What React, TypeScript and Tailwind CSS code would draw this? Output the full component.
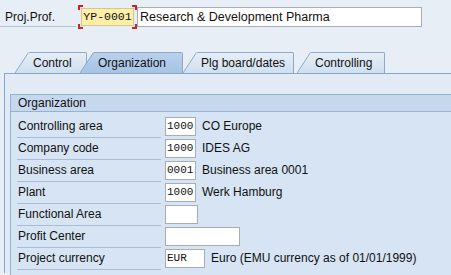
import React from 'react'

type Row = {
  label: string
  value?: string
  width: string
  text?: string
}

const rows: Row[] = [
  { label: 'Controlling area', value: '1000', width: 'w-[31px]', text: 'CO Europe' },
  { label: 'Company code', value: '1000', width: 'w-[31px]', text: 'IDES AG' },
  { label: 'Business area', value: '0001', width: 'w-[31px]', text: 'Business area 0001' },
  { label: 'Plant', value: '1000', width: 'w-[31px]', text: 'Werk Hamburg' },
  { label: 'Functional Area', width: 'w-[33px]' },
  { label: 'Profit Center', width: 'w-[75px]' },
  { label: 'Project currency', value: 'EUR', width: 'w-[40px]', text: 'Euro (EMU currency as of 01/01/1999)' },
]

const tabs = [
  { id: 'ctl', label: 'Control', cls: 'w-[72px] z-[1]' },
  { id: 'org', label: 'Organization', cls: 'w-[103px] -ml-[7px] z-[5]', active: true },
  { id: 'plg', label: 'Plg board/dates', cls: 'w-[111px] z-[2]' },
  { id: 'cos', label: 'Controlling', cls: 'w-[88px] ml-[3px] z-[1]' },
]

const sans = "font-['Liberation_Sans',Arial,sans-serif]"
const mono = "font-['Liberation_Mono','Courier_New',monospace]"

function Tab({ id, label, cls, active }: { id: string; label: string; cls: string; active?: boolean }) {
  const top = active ? '#b9d1ec' : '#e6eef7'
  const bottom = active ? '#a6c4e5' : '#d0dfef'
  return (
    <div className={`relative flex h-[21px] ${cls}`}>
      <svg width="14" height="21" viewBox="0 0 14 21" className="shrink-0">
        <defs>
          <linearGradient id={`tab-${id}`} x1="0" y1="0" x2="0" y2="1">
            <stop offset="0" stopColor={top} />
            <stop offset="1" stopColor={bottom} />
          </linearGradient>
        </defs>
        <polygon points="0,21 13,0.5 14,0.5 14,21" fill={`url(#tab-${id})`} />
        <line x1="0" y1="21" x2="13.5" y2="0.5" stroke="#8fa9c7" strokeWidth="1" />
      </svg>
      <div
        className={`flex-1 flex items-center pl-[4px] border-t border-r border-[#8fa9c7] rounded-tr-[2px] text-[12px] text-[#111] ${
          active ? 'bg-gradient-to-b from-[#b9d1ec] to-[#a6c4e5]' : 'bg-gradient-to-b from-[#e6eef7] to-[#d0dfef]'
        }`}
      >
        {label}
      </div>
    </div>
  )
}

export default function App() {
  return (
    <div className={`w-[451px] h-[275px] overflow-hidden bg-[#e8eef5] ${sans} text-[12px] text-[#111]`}>
      {/* header field */}
      <div className="flex items-center h-[24px] mt-[5px]">
        <div className="w-[76px] h-[20px] flex items-center pl-[5px] border-b border-[#b4c3d4]">Proj.Prof.</div>
        <div className="relative ml-[2px] w-[59px] h-[24px] flex items-center justify-center">
          <span className="absolute left-0 top-0 w-[5px] h-[5px] border-l-2 border-t-2 border-[#d0202a]" />
          <span className="absolute right-0 top-0 w-[5px] h-[5px] border-r-2 border-t-2 border-[#d0202a]" />
          <span className="absolute left-0 bottom-0 w-[5px] h-[5px] border-l-2 border-b-2 border-[#d0202a]" />
          <span className="absolute right-0 bottom-0 w-[5px] h-[5px] border-r-2 border-b-2 border-[#d0202a]" />
          <div className={`w-[53px] h-[18px] bg-[#fdeea8] border border-[#d8c787] flex items-center justify-center ${mono} text-[11.5px]`}>
            YP-0001
          </div>
        </div>
        <div className="w-[285px] h-[20px] bg-white border border-[#a7adb5] flex items-center pl-[2px] text-[12.5px]">
          Research &amp; Development Pharma
        </div>
      </div>

      {/* tabs */}
      <div className="flex mt-[23px] pl-[15px] h-[21px]">
        {tabs.map((t) => (
          <Tab key={t.id} {...t} />
        ))}
      </div>

      {/* panel */}
      <div className="ml-[4px] h-[200px] bg-[#e1eaf5] border-t border-l border-[#89a7cb] pt-[20px] pl-[5px]">
        <div className="border-t border-l border-[#98b1cf] bg-[#d6e4f3] h-[200px]">
          <div className="h-[17px] bg-[#c6d8ed] border-b border-[#98b1cf] flex items-center pl-[7px]">Organization</div>
          <div className="pt-[4px] pl-[6px]">
            {rows.map((r) => (
              <div key={r.label} className="flex items-start h-[22px]">
                <div className="w-[144px] h-[22px] pl-[1px] pt-[3px] border-b border-[#aabdd5] leading-[15px]">{r.label}</div>
                <div
                  className={`ml-[4px] mt-[1px] ${r.width} h-[19px] bg-white border border-[#a7adb5] pl-[1px] flex items-center ${mono} text-[11px]`}
                >
                  {r.value}
                </div>
                {r.text && <div className="ml-[6px] pt-[3px] leading-[15px]">{r.text}</div>}
              </div>
            ))}
          </div>
        </div>
      </div>
    </div>
  )
}
